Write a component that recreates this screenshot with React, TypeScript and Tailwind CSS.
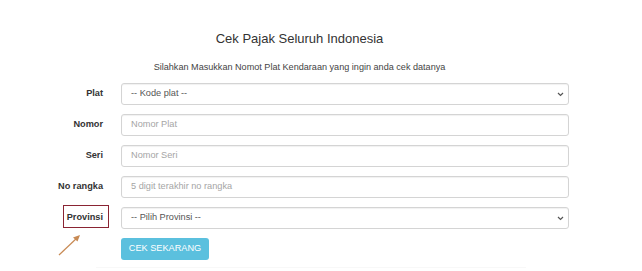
import React from "react";

const Chevron = () => (
  <svg width="7" height="5" viewBox="0 0 7 5" className="absolute right-[4px] top-[8px]">
    <path d="M1 1 L3.5 3.5 L6 1" fill="none" stroke="#555" strokeWidth="1.2" />
  </svg>
);

function Row({ label, placeholder, select, annotated }: { label: string; placeholder: string; select?: boolean; annotated?: boolean }) {
  return (
    <div className="flex items-center gap-[18px] h-[22px]">
      <div className="w-[103px] text-right text-[9.2px] font-bold text-[#333] relative">
        {label}
        {annotated && (
          <div className="absolute left-[63px] top-[-6px] w-[46px] h-[23px] border border-[#8a2433]" />
        )}
      </div>
      <div className="relative w-[448px] h-[22px] rounded-[3px] border border-[#d4d4d4] bg-white shadow-[inset_0_1px_1px_rgba(0,0,0,0.06)] flex items-center pl-[9px]">
        <span className={select ? "text-[9.2px] text-[#555]" : "text-[9.2px] text-[#a5a5a5]"}>{placeholder}</span>
        {select && <Chevron />}
      </div>
    </div>
  );
}

export default function App() {
  return (
    <div className="w-[642px] h-[271px] bg-white relative overflow-hidden" style={{ fontFamily: '"Liberation Sans", Arial, sans-serif' }}>
      <div className="w-[599px] pt-[31px] text-center">
        <div className="text-[13px] leading-[16px] text-[#333]">Cek Pajak Seluruh Indonesia</div>
        <div className="mt-[14px] text-[9.1px] leading-[12px] text-[#444]">Silahkan Masukkan Nomot Plat Kendaraan yang ingin anda cek datanya</div>
      </div>
      <div className="mt-[10px] flex flex-col gap-[9px]">
        <Row label="Plat" placeholder="-- Kode plat --" select />
        <Row label="Nomor" placeholder="Nomor Plat" />
        <Row label="Seri" placeholder="Nomor Seri" />
        <Row label="No rangka" placeholder="5 digit terakhir no rangka" />
        <Row label="Provinsi" placeholder="-- Pilih Provinsi --" select annotated />
        <div className="flex gap-[18px]">
          <div className="w-[103px]" />
          <button className="h-[22px] w-[88px] rounded-[3px] bg-[#5bc0de] text-white text-[9.2px] leading-none">CEK SEKARANG</button>
        </div>
      </div>
      <div className="mx-auto mt-[7px] w-[430px] border-t border-[#f8f8f8] relative left-[-10px]" />
      <svg className="absolute left-[56px] top-[232px]" width="28" height="26" viewBox="0 0 28 26">
        <line x1="3" y1="23" x2="22" y2="5" stroke="#c88a54" strokeWidth="1.2" />
        <path d="M24 3 L17 5.5 L21.5 9.5 Z" fill="#c88a54" />
      </svg>
    </div>
  );
}
